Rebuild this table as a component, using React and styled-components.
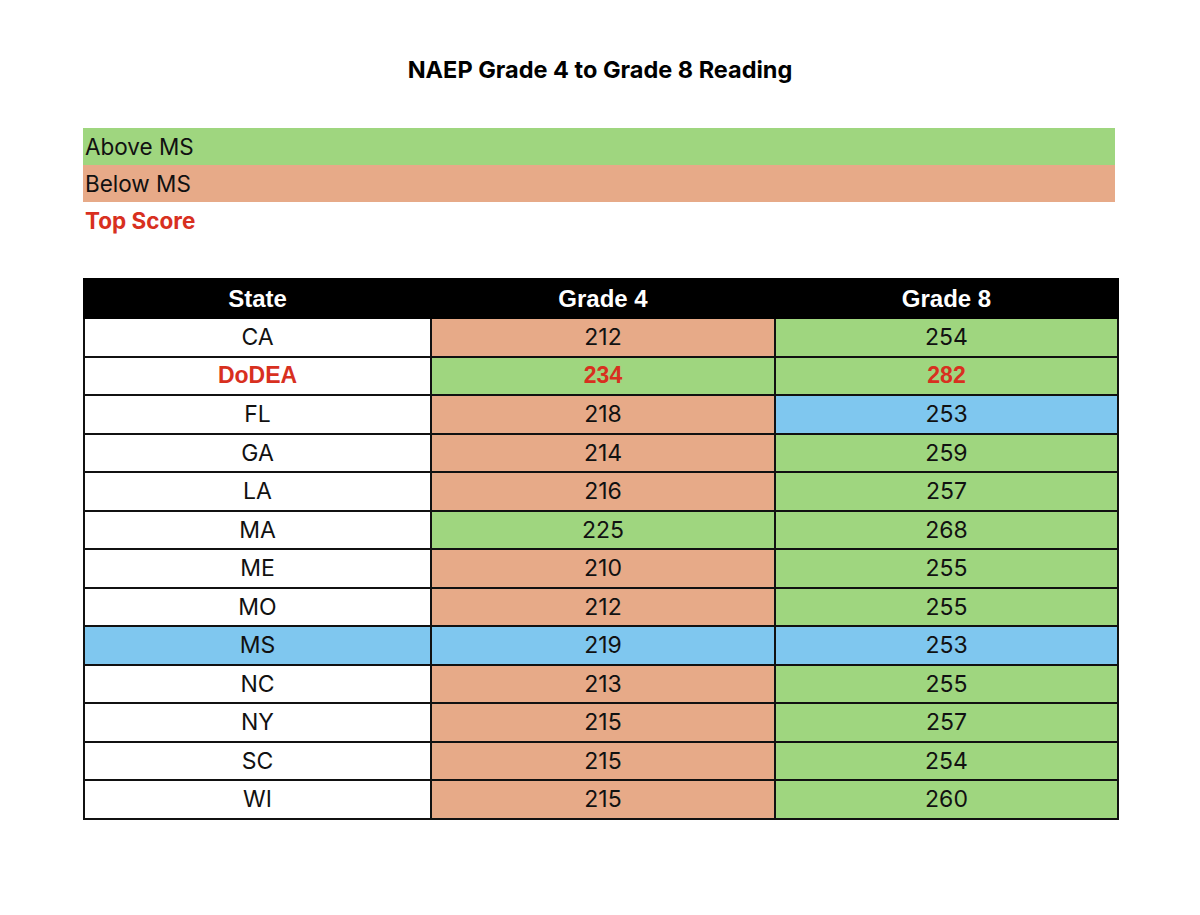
import React from 'react'
import styled, { createGlobalStyle } from 'styled-components'

const GlobalStyle = createGlobalStyle`
  body {
    margin: 0;
    background: #fff;
    font-family: Inter, "Open Sans", sans-serif;
    color: #111;
  }
`

const COLORS = {
  green: '#9fd67f',
  salmon: '#e7aa88',
  blue: '#7fc7ef',
  white: '#fff',
  red: '#d8301f'
}

const Page = styled.div`
  width: 1200px;
  height: 915px;
  padding: 55px 83px 0 83px;
  box-sizing: border-box;
`

const Title = styled.h1`
  margin: 0;
  text-align: center;
  font-size: 23.5px;
  font-weight: 700;
  line-height: 30px;
  color: #000;
`

const Legend = styled.div`
  margin-top: 43px;
  width: 1032px;
  display: flex;
  flex-direction: column;
`

const LegendRow = styled.div`
  height: 37px;
  display: flex;
  align-items: center;
  padding-left: 2px;
  font-size: 22.5px;
  background: ${({ fill }) => fill || 'transparent'};
  color: ${({ red }) => (red ? COLORS.red : '#111')};
  font-weight: ${({ red }) => (red ? 700 : 400)};
`

const Table = styled.table`
  margin-top: 39px;
  width: 1034px;
  border-collapse: collapse;
  table-layout: fixed;
  font-size: 23px;
`

const HeadCell = styled.th`
  height: 37px;
  padding: 0;
  background: #000;
  color: #fff;
  font-family: "Liberation Sans", Arial, sans-serif;
  font-weight: 700;
  font-size: 24px;
  border: 2px solid #000;
`

const Cell = styled.td`
  height: 36.5px;
  padding: 0;
  text-align: center;
  border: 2px solid #111;
  background: ${({ fill }) => COLORS[fill] || COLORS.white};
  color: ${({ top }) => (top ? COLORS.red : '#111')};
  font-weight: ${({ top }) => (top ? 700 : 400)};
  font-family: ${({ top }) =>
    top ? '"Liberation Sans", Arial, sans-serif' : 'Inter, "Open Sans", sans-serif'};
`

const rows = [
  ['CA', 212, 'salmon', 254, 'green'],
  ['DoDEA', 234, 'green', 282, 'green', true],
  ['FL', 218, 'salmon', 253, 'blue'],
  ['GA', 214, 'salmon', 259, 'green'],
  ['LA', 216, 'salmon', 257, 'green'],
  ['MA', 225, 'green', 268, 'green'],
  ['ME', 210, 'salmon', 255, 'green'],
  ['MO', 212, 'salmon', 255, 'green'],
  ['MS', 219, 'blue', 253, 'blue', false, 'blue'],
  ['NC', 213, 'salmon', 255, 'green'],
  ['NY', 215, 'salmon', 257, 'green'],
  ['SC', 215, 'salmon', 254, 'green'],
  ['WI', 215, 'salmon', 260, 'green']
]

export default function App() {
  return (
    <Page>
      <GlobalStyle />
      <Title>NAEP Grade 4 to Grade 8 Reading</Title>
      <Legend>
        <LegendRow fill={COLORS.green}>Above MS</LegendRow>
        <LegendRow fill={COLORS.salmon}>Below MS</LegendRow>
        <LegendRow red>Top Score</LegendRow>
      </Legend>
      <Table>
        <colgroup>
          <col style={{ width: 347 }} />
          <col style={{ width: 344 }} />
          <col style={{ width: 343 }} />
        </colgroup>
        <thead>
          <tr>
            <HeadCell>State</HeadCell>
            <HeadCell>Grade 4</HeadCell>
            <HeadCell>Grade 8</HeadCell>
          </tr>
        </thead>
        <tbody>
          {rows.map(([state, g4, f4, g8, f8, top, fs]) => (
            <tr key={state}>
              <Cell fill={fs} top={top}>{state}</Cell>
              <Cell fill={f4} top={top}>{g4}</Cell>
              <Cell fill={f8} top={top}>{g8}</Cell>
            </tr>
          ))}
        </tbody>
      </Table>
    </Page>
  )
}
